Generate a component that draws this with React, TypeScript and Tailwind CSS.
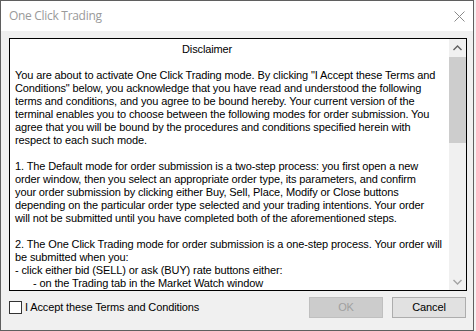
import React from "react";

const p1 = [
  'You are about to activate One Click Trading mode. By clicking "I Accept these Terms and',
  'Conditions" below, you acknowledge that you have read and understood the following',
  "terms and conditions, and you agree to be bound hereby. Your current version of the",
  "terminal enables you to choose between the following modes for order submission. You",
  "agree that you will be bound by the procedures and conditions specified herein with",
  "respect to each such mode.",
];
const p2 = [
  "1. The Default mode for order submission is a two-step process: you first open a new",
  "order window, then you select an appropriate order type, its parameters, and confirm",
  "your order submission by clicking either Buy, Sell, Place, Modify or Close buttons",
  "depending on the particular order type selected and your trading intentions. Your order",
  "will not be submitted until you have completed both of the aforementioned steps.",
];
const p3 = [
  "2. The One Click Trading mode for order submission is a one-step process. Your order will",
  "be submitted when you:",
  "- click either bid (SELL) or ask (BUY) rate buttons either:",
];

function Line({ children, className = "" }: { children?: React.ReactNode; className?: string }) {
  return <div className={"h-[13px] leading-[13px] whitespace-nowrap " + className}>{children}</div>;
}

export default function App() {
  return (
    <div className="w-[476px] h-[331px] bg-[#f3f3f3] overflow-hidden">
      <div
        className="w-[474px] h-[331px] border border-[#5f5f5f] flex flex-col bg-[#f0f0f0] tracking-[-0.12px]"
        style={{ fontFamily: '"Liberation Sans", Arial, sans-serif' }}
      >
        <div className="h-[30px] bg-white flex items-center justify-between pl-[8px] pr-[8px] shrink-0">
          <span
            className="text-[12px] text-[#9a9a9a] tracking-[-0.3px]"
            style={{ fontFamily: '"Open Sans", "Noto Sans", sans-serif' }}
          >
            One Click Trading
          </span>
          <svg width="11" height="11" viewBox="0 0 11 11">
            <path d="M0.5 0.5 L10.5 10.5 M10.5 0.5 L0.5 10.5" stroke="#8a8a8a" strokeWidth="1" />
          </svg>
        </div>
        <div className="flex-1 flex flex-col pl-[8px] pt-[7px]">
          <div className="w-[458px] h-[253px] border border-black bg-white flex">
            <div className="flex-1 overflow-hidden pl-[5px] pt-[4px] text-[11px] text-black">
              <Line className="pl-[167px]">Disclaimer</Line>
              <Line />
              {p1.map((t) => (
                <Line key={t}>{t}</Line>
              ))}
              <Line />
              {p2.map((t) => (
                <Line key={t}>{t}</Line>
              ))}
              <Line />
              {p3.map((t) => (
                <Line key={t}>{t}</Line>
              ))}
              <Line className="pl-[18px]">- on the Trading tab in the Market Watch window</Line>
            </div>
            <div className="w-[17px] bg-[#f0f0f0] flex flex-col shrink-0">
              <div className="h-[18px] flex items-center justify-center">
                <svg width="9" height="6" viewBox="0 0 9 6">
                  <path d="M0.5 5 L4.5 1 L8.5 5" stroke="#606060" strokeWidth="1.4" fill="none" />
                </svg>
              </div>
              <div className="h-[86px] bg-[#cdcdcd]" />
              <div className="flex-1" />
              <div className="h-[17px] flex items-center justify-center">
                <svg width="9" height="6" viewBox="0 0 9 6">
                  <path d="M0.5 1 L4.5 5 L8.5 1" stroke="#a3a3a3" strokeWidth="1.4" fill="none" />
                </svg>
              </div>
            </div>
          </div>
          <div className="flex items-start justify-between pr-[7px] text-[11px]">
            <label className="flex items-center mt-[10px] h-[13px]">
              <span className="w-[13px] h-[13px] border border-[#333333] bg-white shrink-0" />
              <span className="ml-[3px] leading-[13px]">I Accept these Terms and Conditions</span>
            </label>
            <div className="flex gap-[9px] mt-[6px]">
              <div className="w-[74px] h-[21px] border border-[#bfbfbf] bg-[#cccccc] text-[#a0a0a0] flex items-center justify-center">
                OK
              </div>
              <div className="w-[74px] h-[21px] border border-[#adadad] bg-[#e1e1e1] text-black flex items-center justify-center">
                Cancel
              </div>
            </div>
          </div>
        </div>
      </div>
    </div>
  );
}
